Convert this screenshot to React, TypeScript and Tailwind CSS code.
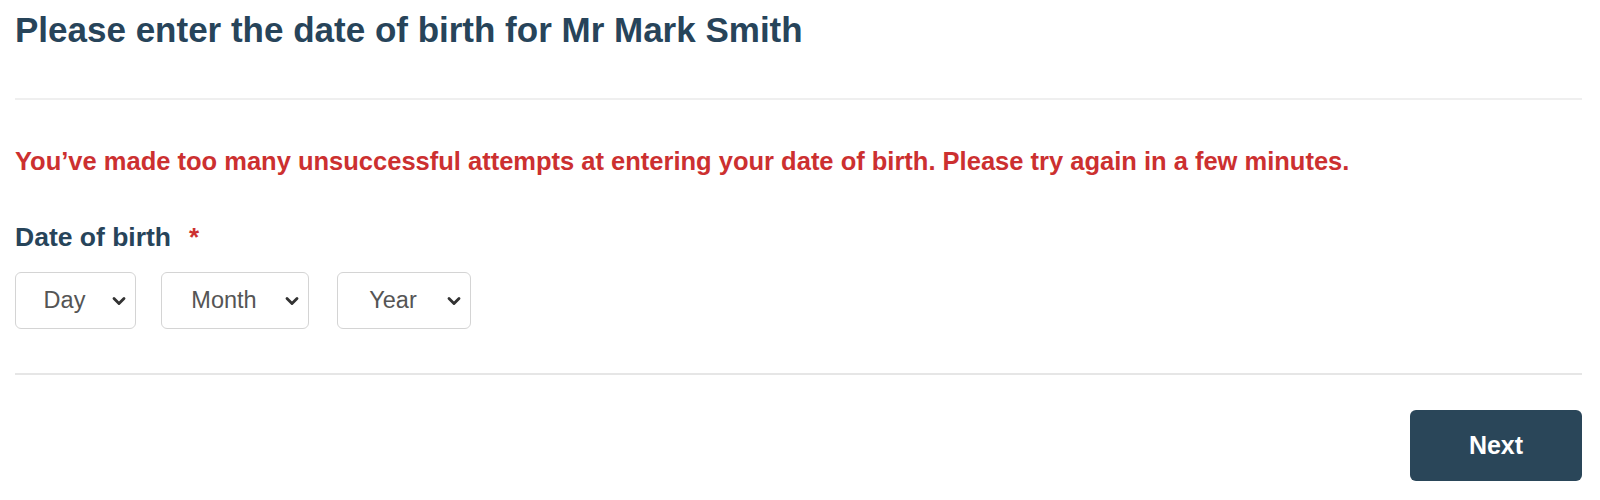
import { ChevronDown } from 'lucide-react'

const font = { fontFamily: '"Liberation Sans", Arial, Helvetica, sans-serif' }

function DateSelect({ label, width }: { label: string; width: string }) {
  return (
    <div className={`relative ${width}`}>
      <select
        defaultValue=""
        className="w-full h-[57px] appearance-none rounded-[6px] border-[1.5px] border-[#d4d4d4] bg-white pr-[22px] text-center text-[23.5px] text-[#555555] focus:outline-none"
      >
        <option value="">{label}</option>
      </select>
      <ChevronDown
        className="pointer-events-none absolute right-[7px] top-1/2 -translate-y-1/2 size-[20px] text-[#333333]"
        strokeWidth={3.4}
      />
    </div>
  )
}

export default function App() {
  return (
    <div className="min-h-[500px] bg-white pl-[15px] pr-[18px]" style={font}>
      {/* Heading */}
      <h1 className="pt-[9px] text-[35px] leading-[42px] font-bold text-[#27445a]">
        Please enter the date of birth for Mr Mark Smith
      </h1>

      <div className="mt-[47px] h-[2px] bg-[#efefef]"></div>

      {/* Error */}
      <p className="mt-[46px] text-[25.5px] leading-[30px] font-bold text-[#cc3030]">
        You’ve made too many unsuccessful attempts at entering your date of birth. Please try again in a few minutes.
      </p>

      {/* Date of birth */}
      <div className="mt-[45px] flex items-start gap-[18px]">
        <label className="text-[26.5px] leading-[32px] font-bold text-[#27445a]">Date of birth</label>
        <span className="text-[26px] leading-[32px] font-bold text-[#cc3030]">*</span>
      </div>

      <div className="mt-[19px] flex">
        <DateSelect label="Day" width="w-[121px]" />
        <div className="w-[25px]"></div>
        <DateSelect label="Month" width="w-[148px]" />
        <div className="w-[28px]"></div>
        <DateSelect label="Year" width="w-[134px]" />
      </div>

      <div className="mt-[44px] h-[2px] bg-[#e6e6e6]"></div>

      {/* Footer */}
      <div className="mt-[35px] flex justify-end">
        <button className="h-[71px] w-[172px] rounded-[6px] bg-[#2a4659] text-[25px] font-bold text-white">
          Next
        </button>
      </div>
    </div>
  )
}
